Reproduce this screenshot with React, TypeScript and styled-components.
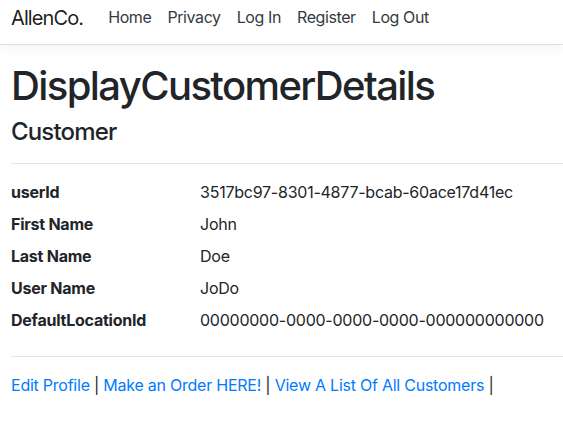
import React from "react";
import styled, { createGlobalStyle } from "styled-components";

const GlobalStyle = createGlobalStyle`
  html, body {
    margin: 0;
    background: #fff;
    color: #212529;
    font-family: Inter, "Liberation Sans", sans-serif;
    font-size: 16px;
    line-height: 1.5;
    letter-spacing: -0.015em;
  }
  * { box-sizing: border-box; }
`;

const Navbar = styled.header`
  display: flex;
  align-items: flex-start;
  height: 45px;
  padding: 3px 11px 0;
  background: #fff;
  border-bottom: 1px solid #dee2e6;
  box-shadow: 0 4px 12px rgba(0, 0, 0, 0.05);
`;

const Brand = styled.a`
  font-size: 20px;
  line-height: 30px;
  letter-spacing: -0.045em;
  color: rgba(0, 0, 0, 0.9);
  text-decoration: none;
  margin-right: 17px;
`;

const NavList = styled.nav`
  display: flex;
  padding-top: 2px;
`;

const NavLink = styled.a`
  padding: 0 8px;
  line-height: 24px;
  letter-spacing: -0.025em;
  color: #343a40;
  text-decoration: none;
`;

const Main = styled.main`
  padding: 17px 0 0 11px;
`;

const Title = styled.h1`
  margin: 0 0 8px;
  font-size: 40px;
  font-weight: 500;
  line-height: 1.2;
  letter-spacing: -0.04em;
`;

const Subtitle = styled.h4`
  margin: 0;
  font-size: 24px;
  font-weight: 500;
  line-height: 1.2;
  letter-spacing: -0.035em;
`;

const Rule = styled.hr`
  margin: 16px 0;
  border: 0;
  border-top: 1px solid rgba(0, 0, 0, 0.1);
`;

const DetailList = styled.dl`
  display: grid;
  grid-template-columns: 189px 1fr;
  margin: 0;
`;

const Term = styled.dt`
  font-weight: 700;
  margin-bottom: 8px;
`;

const Value = styled.dd`
  margin: 0 0 8px;
`;

const Actions = styled.div`
  color: #212529;
`;

const ActionLink = styled.a`
  color: #007bff;
  text-decoration: none;
`;

const details: [string, string][] = [
  ["userId", "3517bc97-8301-4877-bcab-60ace17d41ec"],
  ["First Name", "John"],
  ["Last Name", "Doe"],
  ["User Name", "JoDo"],
  ["DefaultLocationId", "00000000-0000-0000-0000-000000000000"],
];

const actions = ["Edit Profile", "Make an Order HERE!", "View A List Of All Customers"];

export default function App() {
  return (
    <>
      <GlobalStyle />
      <Navbar>
        <Brand href="#">AllenCo.</Brand>
        <NavList>
          <NavLink href="#">Home</NavLink>
          <NavLink href="#">Privacy</NavLink>
          <NavLink href="#">Log In</NavLink>
          <NavLink href="#">Register</NavLink>
          <NavLink href="#">Log Out</NavLink>
        </NavList>
      </Navbar>
      <Main>
        <Title>DisplayCustomerDetails</Title>
        <Subtitle>Customer</Subtitle>
        <Rule />
        <DetailList>
          {details.map(([label, value]) => (
            <React.Fragment key={label}>
              <Term>{label}</Term>
              <Value>{value}</Value>
            </React.Fragment>
          ))}
        </DetailList>
        <Rule />
        <Actions>
          {actions.map((a) => (
            <React.Fragment key={a}>
              <ActionLink href="#">{a}</ActionLink> |{" "}
            </React.Fragment>
          ))}
        </Actions>
      </Main>
    </>
  );
}
